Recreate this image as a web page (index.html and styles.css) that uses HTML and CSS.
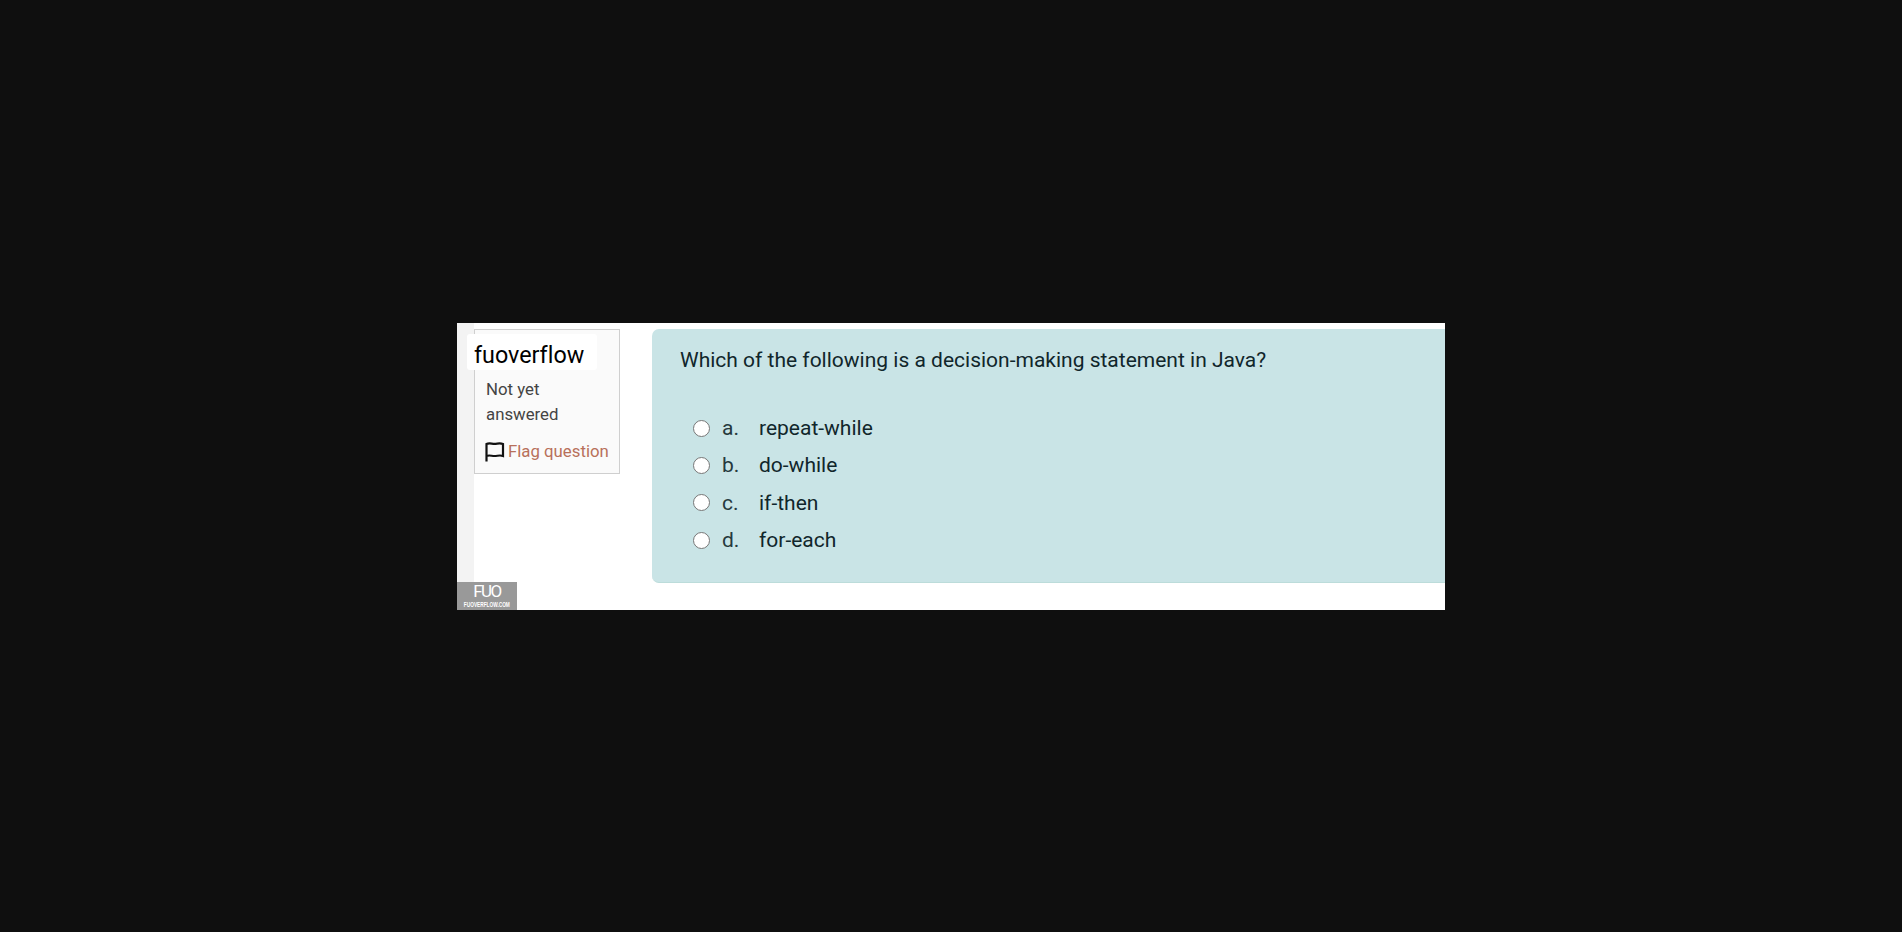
FILE: index.html
```html
<!DOCTYPE html>
<html lang="en">
<head>
    <meta charset="UTF-8">
    <title>Quiz question</title>
    <link rel="stylesheet" href="styles.css">
</head>
<body>

<div class="shot">
    <div class="strip"></div>

    <div class="side">
        <div class="info">
            <p class="state">Not yet answered</p>
            <p class="flag">
                <svg class="flag-icon" width="21" height="21" viewBox="0 0 21 21">
                    <path d="M2.500 20.500V3C5 1.800 7.500 2.800 10.500 2.800S16 1.800 19 3V15C16 13.800 13.500 15 10.500 15S5 13.800 2.500 15" fill="none" stroke="#111" stroke-width="2.200"/>
                </svg>
                <span>Flag question</span>
            </p>
        </div>
    </div>

    <div class="card">
        <p class="question">Which of the following is a decision-making statement in Java?</p>
        <div class="answers">
            <div class="answer"><span class="radio"></span><span class="letter">a.</span><span>repeat-while</span></div>
            <div class="answer"><span class="radio"></span><span class="letter">b.</span><span>do-while</span></div>
            <div class="answer"><span class="radio"></span><span class="letter">c.</span><span>if-then</span></div>
            <div class="answer"><span class="radio"></span><span class="letter">d.</span><span>for-each</span></div>
        </div>
    </div>

    <div class="brand">fuoverflow</div>

    <div class="logo">
        <span class="logo-mark">FUO</span>
        <span class="logo-site">FUOVERFLOW.COM</span>
    </div>
</div>

</body>
</html>
```

FILE: styles.css
```css
* {
    box-sizing: border-box;
}

body {
    font-family: Roboto, 'Liberation Sans', sans-serif;
    margin: 0;
    background-color: #0f0f0f;
    display: flex;
    align-items: center;
    justify-content: center;
    min-height: 100vh;
}

p {
    margin: 0;
}

.shot {
    position: relative;
    display: flex;
    width: 988px;
    height: 287px;
    background-color: #fff;
    overflow: hidden;
}

.strip {
    width: 17px;
    background-color: #f3f3f3;
}

.side {
    width: 178px;
    padding-top: 6px;
}

.info {
    width: 146px;
    height: 145px;
    padding: 47px 0 0 11px;
    background-color: #fafafa;
    border: 1px solid #cfcfcf;
    color: #444;
    font-size: 16.800px;
    line-height: 25px;
}

.state {
    width: 100px;
}

.flag {
    display: flex;
    align-items: center;
    gap: 3px;
    margin-top: 12px;
    color: #b8705a;
    white-space: nowrap;
}

.flag-icon {
    flex: none;
    margin-left: -2px;
}

.card {
    flex: 1;
    margin-top: 6px;
    height: 254px;
    padding: 17px 0 0 28px;
    background-color: #c9e4e6;
    border-radius: 7px 0 0 7px;
    border-bottom: 1px solid #bcdcda;
    color: #10262b;
    font-size: 21px;
}

.question {
    line-height: 29px;
}

.answers {
    margin-top: 35px;
}

.answer {
    display: flex;
    align-items: center;
    height: 37.300px;
}

.radio {
    width: 17px;
    height: 17px;
    margin-left: 13px;
    background-color: #fff;
    border: 1.500px solid #777;
    border-radius: 50%;
}

.letter {
    width: 37px;
    margin-left: 12px;
    color: #26393d;
}

.brand {
    position: absolute;
    left: 10px;
    top: 11px;
    width: 130px;
    height: 36px;
    padding: 5px 0 0 7px;
    background-color: #fff;
    border-radius: 3px;
    color: #000;
    font-size: 23.300px;
    font-variant-ligatures: none;
    line-height: 32px;
}

.logo {
    position: absolute;
    left: 0;
    bottom: 0;
    width: 60px;
    height: 28px;
    display: flex;
    flex-direction: column;
    align-items: center;
    background-color: #999;
    color: #fff;
}

.logo-mark {
    margin-top: 2px;
    font-size: 17px;
    line-height: 15px;
    letter-spacing: -1.500px;
}

.logo-site {
    margin-top: 2px;
    font-family: 'Liberation Sans', sans-serif;
    font-size: 7px;
    font-weight: bold;
    line-height: 8px;
    white-space: nowrap;
    transform: scaleX(0.68);
}
```
